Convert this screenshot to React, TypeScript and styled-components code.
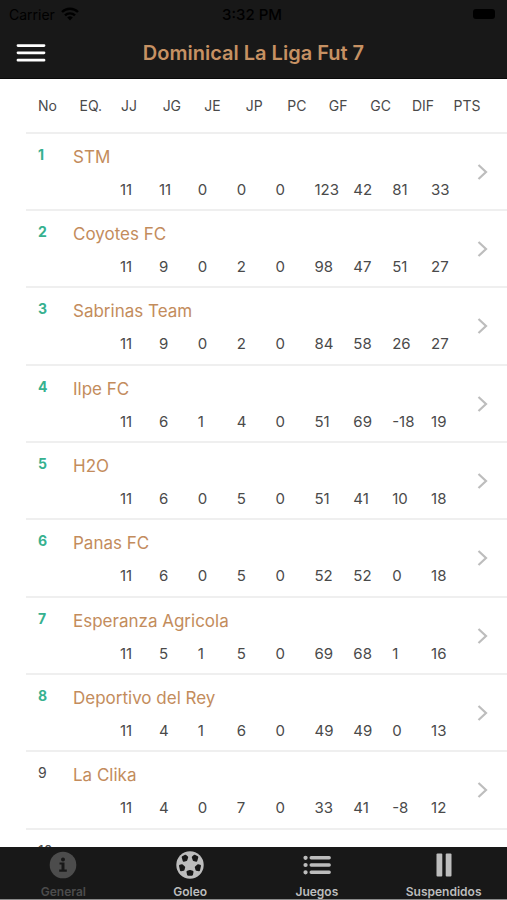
import React from 'react';
import styled, { createGlobalStyle } from 'styled-components';

const GlobalStyle = createGlobalStyle`
  * { box-sizing: border-box; }
  body {
    margin: 0;
    background: #fff;
    font-family: Inter, 'Liberation Sans', sans-serif;
    color: #4a4a4a;
  }
  button { font: inherit; border: 0; padding: 0; background: none; cursor: pointer; }
`;

const Screen = styled.div`
  display: flex;
  flex-direction: column;
  height: 100vh;
`;

const TopBar = styled.header`
  flex: none;
  background: #181818;
  border-bottom: 1px solid #0a0a0a;
`;

const StatusBar = styled.div`
  display: grid;
  grid-template-columns: 1fr auto 1fr;
  align-items: center;
  height: 28px;
  padding: 0 12px 0 9px;
  font-size: 14px;
  color: #000;
`;

const Carrier = styled.span`
  display: flex;
  align-items: center;
  gap: 6px;
`;

const Clock = styled.time`
  font-size: 15px;
  font-weight: 500;
`;

const Battery = styled.span`
  justify-self: end;
  width: 22px;
  height: 10px;
  border-radius: 3px;
  background: #000;
`;

const NavBar = styled.div`
  display: grid;
  grid-template-columns: 40px 1fr 40px;
  align-items: center;
  height: 50px;
  padding: 0 16px;
`;

const MenuButton = styled.button`
  display: flex;
  width: 30px;
  color: #fff;
`;

const Title = styled.h1`
  margin: 0;
  font-size: 20px;
  line-height: 24px;
  font-weight: 600;
  text-align: center;
  color: #c69163;
`;

const Content = styled.main`
  flex: 1;
  min-height: 0;
  overflow: hidden;
`;

const Table = styled.table`
  display: block;
`;

const Head = styled.thead`
  display: block;
`;

const Body = styled.tbody`
  display: block;
`;

const HeadRow = styled.tr`
  display: grid;
  grid-template-columns: repeat(11, 1fr);
  align-items: center;
  height: 55px;
  margin-left: 26px;
  padding: 1px 12px 0;
  border-bottom: 2px solid #efefef;
`;

const HeadCell = styled.th`
  padding: 0;
  font-size: 14px;
  line-height: 20px;
  font-weight: 400;
  text-align: left;
`;

const TeamRow = styled.tr`
  display: grid;
  grid-template-columns: 35px 47px repeat(9, 1fr) 37px;
  grid-template-rows: 32px 32px;
  height: 77px;
  margin-left: 26px;
  padding: 6px 0 0 12px;
  border-bottom: 2px solid #efefef;

  &:nth-child(3n) {
    height: 78px;
  }
`;

const Rank = styled.td<{ $qualified: boolean }>`
  padding: 5px 0 0;
  font-size: 14px;
  line-height: 20px;
  font-weight: ${(p) => (p.$qualified ? 700 : 400)};
  color: ${(p) => (p.$qualified ? '#36b18f' : '#4a4a4a')};
`;

const TeamName = styled.th`
  grid-column: 2 / 12;
  padding: 5px 0 0;
  font-size: 17px;
  line-height: 24px;
  font-weight: 400;
  text-align: left;
  color: #c38c5c;
`;

const Stat = styled.td<{ $column: number }>`
  grid-row: 2;
  grid-column: ${(p) => p.$column};
  padding: 8px 0 0;
  font-size: 15px;
  line-height: 20px;
`;

const OpenCell = styled.td`
  grid-column: 12;
  grid-row: 1 / 3;
  display: flex;
  align-items: center;
  padding: 0 0 0 7px;
`;

const OpenButton = styled.button`
  display: flex;
  color: #bdbdbd;
`;

const TabBar = styled.nav`
  flex: none;
  display: grid;
  grid-template-columns: repeat(4, 1fr);
  height: 53px;
  background: #181818;
  border-bottom: 1px solid #8a8a8a;
`;

const Tab = styled.button<{ $active?: boolean }>`
  display: flex;
  flex-direction: column;
  align-items: center;
  justify-content: flex-start;
  gap: 5px;
  padding-top: 4px;
  font-size: 12px;
  line-height: 16px;
  font-weight: 600;
  color: ${(p) => (p.$active ? '#4c4c4c' : '#bdbdbd')};

  svg { flex: none; }
`;

const WifiIcon = () => (
  <svg width="18" height="14" viewBox="0 0 18 14" fill="none" stroke="currentColor" strokeWidth="2.4" aria-hidden="true">
    <path d="M1 5a11.5 11.5 0 0 1 16 0" />
    <path d="M4 8.4a7.2 7.2 0 0 1 10 0" />
    <path d="M9 13.5 6.2 10.6a4 4 0 0 1 5.6 0Z" fill="currentColor" stroke="none" />
  </svg>
);

const MenuIcon = () => (
  <svg width="30" height="20" viewBox="0 0 30 20" stroke="currentColor" strokeWidth="2.8" strokeLinecap="round" aria-hidden="true">
    <path d="M2 2.6h26M2 9.8h26M2 17.2h26" />
  </svg>
);

const ChevronIcon = () => (
  <svg width="12" height="18" viewBox="0 0 12 18" fill="none" stroke="currentColor" strokeWidth="2.2" aria-hidden="true">
    <path d="m1.500 2 7.500 7-7.500 7" />
  </svg>
);

const InfoIcon = () => (
  <svg width="28" height="28" viewBox="0 0 28 28" aria-hidden="true">
    <circle cx="14" cy="14" r="13.3" fill="currentColor" />
    <circle cx="14" cy="8.5" r="2" fill="#181818" />
    <path d="M10.500 11.500h5v7h2.300v2.200h-7.600v-2.200H12.500v-4.900h-2z" fill="#181818" />
  </svg>
);

const BallIcon = () => (
  <svg width="28" height="28" viewBox="0 0 28 28" aria-hidden="true">
    <circle cx="14" cy="14" r="13.7" fill="currentColor" />
    <g fill="#181818" stroke="#181818" strokeWidth="2" strokeLinejoin="round">
      <path d="M6.700 6.200 9.500 4.700 11.200 6.300 10.300 9 7.700 9.700Z" />
      <path d="M21.300 6.200 18.500 4.700 16.800 6.300 17.700 9 20.300 9.700Z" />
      <path d="M4 14.800 6 14.300 8.200 16.300 7.500 18.800 5 19.200Z" />
      <path d="M24 14.800 22 14.300 19.800 16.300 20.500 18.800 23 19.200Z" />
      <path d="M11.500 20.800 14 20 16.500 20.800 16 23.700 12 23.700Z" />
    </g>
  </svg>
);

const ListIcon = () => (
  <svg width="28" height="28" viewBox="0 0 28 28" stroke="currentColor" strokeLinecap="round" aria-hidden="true">
    <path d="M8.200 6.800h18M8.200 14h18M8.200 21.300h18" strokeWidth="3.4" />
    <path d="M2.500 6.800h.1M2.500 14h.1M2.500 21.300h.1" strokeWidth="4.200" />
  </svg>
);

const PauseIcon = () => (
  <svg width="28" height="28" viewBox="0 0 28 28" fill="currentColor" aria-hidden="true">
    <rect x="6.500" y="2.500" width="5.800" height="23" rx="1" />
    <rect x="15.700" y="2.500" width="5.800" height="23" rx="1" />
  </svg>
);

const columns = ['No', 'EQ.', 'JJ', 'JG', 'JE', 'JP', 'PC', 'GF', 'GC', 'DIF', 'PTS'];

const teams: { name: string; stats: number[] }[] = [
  { name: 'STM', stats: [11, 11, 0, 0, 0, 123, 42, 81, 33] },
  { name: 'Coyotes FC', stats: [11, 9, 0, 2, 0, 98, 47, 51, 27] },
  { name: 'Sabrinas Team', stats: [11, 9, 0, 2, 0, 84, 58, 26, 27] },
  { name: 'Ilpe FC', stats: [11, 6, 1, 4, 0, 51, 69, -18, 19] },
  { name: 'H2O', stats: [11, 6, 0, 5, 0, 51, 41, 10, 18] },
  { name: 'Panas FC', stats: [11, 6, 0, 5, 0, 52, 52, 0, 18] },
  { name: 'Esperanza Agricola', stats: [11, 5, 1, 5, 0, 69, 68, 1, 16] },
  { name: 'Deportivo del Rey', stats: [11, 4, 1, 6, 0, 49, 49, 0, 13] },
  { name: 'La Clika', stats: [11, 4, 0, 7, 0, 33, 41, -8, 12] },
  { name: '', stats: [] },
];

const QUALIFYING_PLACES = 8;
const FIRST_STAT_COLUMN = 3;

export default function App() {
  return (
    <Screen>
      <GlobalStyle />
      <TopBar>
        <StatusBar>
          <Carrier>Carrier <WifiIcon /></Carrier>
          <Clock>3:32 PM</Clock>
          <Battery />
        </StatusBar>
        <NavBar>
          <MenuButton aria-label="Menú"><MenuIcon /></MenuButton>
          <Title>Dominical La Liga Fut 7</Title>
        </NavBar>
      </TopBar>
      <Content>
        <Table>
          <Head>
            <HeadRow>
              {columns.map((c) => <HeadCell key={c} scope="col">{c}</HeadCell>)}
            </HeadRow>
          </Head>
          <Body>
            {teams.map((team, i) => (
              <TeamRow key={i}>
                <Rank $qualified={i < QUALIFYING_PLACES}>{i + 1}</Rank>
                <TeamName scope="row">{team.name}</TeamName>
                {team.stats.map((value, j) => (
                  <Stat key={j} $column={FIRST_STAT_COLUMN + j}>{value}</Stat>
                ))}
                <OpenCell>
                  <OpenButton aria-label={`Ver ${team.name}`}><ChevronIcon /></OpenButton>
                </OpenCell>
              </TeamRow>
            ))}
          </Body>
        </Table>
      </Content>
      <TabBar>
        <Tab $active aria-current="page"><InfoIcon />General</Tab>
        <Tab><BallIcon />Goleo</Tab>
        <Tab><ListIcon />Juegos</Tab>
        <Tab><PauseIcon />Suspendidos</Tab>
      </TabBar>
    </Screen>
  );
}
